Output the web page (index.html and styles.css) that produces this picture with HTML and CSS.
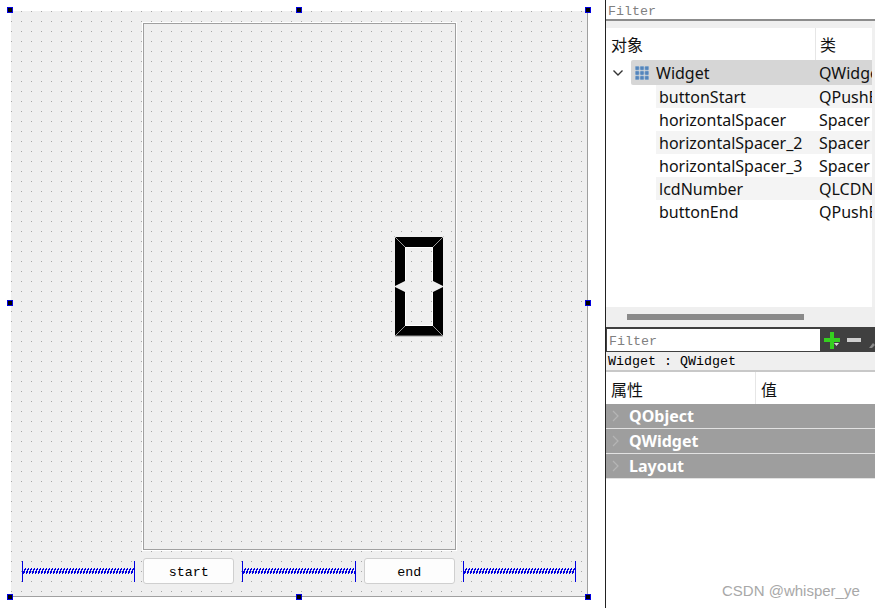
FILE: index.html
```html
<!DOCTYPE html>
<html lang="en">
<head>
  <meta charset="UTF-8" />
  <title>Qt Designer - Widget</title>
  <link rel="stylesheet" href="styles.css">
</head>
<body>
  <!-- Form editor -->
  <div class="editor">
    <div class="form">
      <div class="frame">
        <svg class="lcd" width="50" height="101" viewBox="0 0 50 101">
          <g fill="#000">
            <polygon points="1,1 49,1 39,11 11,11" />
            <polygon points="1,1 11,11 11,45 1,50" />
            <polygon points="49,1 39,11 39,45 49,50" />
            <polygon points="1,51 11,56 11,90 1,100" />
            <polygon points="49,51 39,56 39,90 49,100" />
            <polygon points="11,90 39,90 49,100 1,100" />
          </g>
          <path d="M0.5 0.5 L11 11 M49.5 0.5 L39 11 M1 100 L11 90 M49 100 L39 90 M1 100 H49" fill="none" stroke="#9a9a9a" stroke-width="1" />
          <path d="M11.5 11.5 H38.5 V44 M11.5 11.5 V44 M11.5 57 V89.5 H38.5 V57" fill="none" stroke="#fff" stroke-width="1" />
        </svg>
      </div>
      <div class="button-row">
        <div class="spacer"></div>
        <div class="push-button">start</div>
        <div class="spacer"></div>
        <div class="push-button">end</div>
        <div class="spacer"></div>
      </div>
      <span class="handle h-tl"></span>
      <span class="handle h-tc"></span>
      <span class="handle h-tr"></span>
      <span class="handle h-ml"></span>
      <span class="handle h-mr"></span>
      <span class="handle h-bl"></span>
      <span class="handle h-bc"></span>
      <span class="handle h-br"></span>
    </div>
  </div>

  <!-- Right docks -->
  <div class="docks">
    <div class="filter-top">Filter</div>
    <div class="inspector">
      <div class="table-head">
        <div class="head-cell col-name">对象</div>
        <div class="head-cell col-class">类</div>
      </div>
      <div class="tree-row root">
        <svg class="arrow" width="12" height="8" viewBox="0 0 12 8"><path d="M1.5 1.5 L6 6 L10.5 1.5" fill="none" stroke="#333" stroke-width="1.4" /></svg>
        <div class="root-sel">
          <svg class="widget-icon" width="14" height="14" viewBox="0 0 14 14">
            <g fill="#5585bb" stroke="#8fb2d6" stroke-width="0.5">
              <rect x="0.3" y="0.3" width="3.8" height="3.8" rx="0.8" /><rect x="5.1" y="0.3" width="3.8" height="3.8" rx="0.8" /><rect x="9.9" y="0.3" width="3.8" height="3.8" rx="0.8" />
              <rect x="0.3" y="5.1" width="3.8" height="3.8" rx="0.8" /><rect x="5.1" y="5.1" width="3.8" height="3.8" rx="0.8" /><rect x="9.9" y="5.1" width="3.8" height="3.8" rx="0.8" />
              <rect x="0.3" y="9.9" width="3.8" height="3.8" rx="0.8" /><rect x="5.1" y="9.9" width="3.8" height="3.8" rx="0.8" /><rect x="9.9" y="9.9" width="3.8" height="3.8" rx="0.8" />
            </g>
          </svg>
          <span class="obj-name">Widget</span>
          <span class="obj-class">QWidget</span>
        </div>
      </div>
      <div class="tree-row child alt"><span class="obj-name">buttonStart</span><span class="obj-class">QPushButton</span></div>
      <div class="tree-row child"><span class="obj-name">horizontalSpacer</span><span class="obj-class">Spacer</span></div>
      <div class="tree-row child alt"><span class="obj-name">horizontalSpacer_2</span><span class="obj-class">Spacer</span></div>
      <div class="tree-row child"><span class="obj-name">horizontalSpacer_3</span><span class="obj-class">Spacer</span></div>
      <div class="tree-row child alt"><span class="obj-name">lcdNumber</span><span class="obj-class">QLCDNumber</span></div>
      <div class="tree-row child"><span class="obj-name">buttonEnd</span><span class="obj-class">QPushButton</span></div>
    </div>
    <div class="scrollbar"><div class="scroll-thumb"></div></div>

    <div class="prop-toolbar">
      <div class="filter-input">Filter</div>
      <svg class="tool-plus" width="16" height="19" viewBox="0 0 16 19">
        <path d="M6 1 H10 V7 H16 V11 H10 V18 H6 V11 H0 V7 H6 Z" fill="#35d01f" />
        <path d="M10 12 H15 L12.5 15 Z" fill="#ddd" />
      </svg>
      <div class="tool-minus"></div>
      <svg class="tool-edit" width="6" height="8" viewBox="0 0 6 8"><path d="M0 7 L4 2 L6 4 L3 7 Z" fill="#8a8a8a" /></svg>
    </div>
    <div class="prop-title">Widget : QWidget</div>
    <div class="table-head prop-head">
      <div class="head-cell col-prop">属性</div>
      <div class="head-cell">值</div>
    </div>
    <div class="group-row"><svg class="group-arrow" width="7" height="12" viewBox="0 0 7 12"><path d="M1 1 L6 6 L1 11" fill="none" stroke="#b5b5b5" stroke-width="1.2" /></svg>QObject</div>
    <div class="group-row"><svg class="group-arrow" width="7" height="12" viewBox="0 0 7 12"><path d="M1 1 L6 6 L1 11" fill="none" stroke="#b5b5b5" stroke-width="1.2" /></svg>QWidget</div>
    <div class="group-row"><svg class="group-arrow" width="7" height="12" viewBox="0 0 7 12"><path d="M1 1 L6 6 L1 11" fill="none" stroke="#b5b5b5" stroke-width="1.2" /></svg>Layout</div>
  </div>

  <div class="watermark">CSDN @whisper_ye</div>
</body>
</html>
```

FILE: styles.css
```css
* {
  box-sizing: border-box;
  margin: 0;
  padding: 0;
}
body {
  display: flex;
  width: 875px;
  height: 608px;
  overflow: hidden;
  position: relative;
  background-color: #fff;
  font-family: "Noto Sans", "Noto Sans CJK SC", sans-serif;
  color: #111;
}

/* Form editor */
.editor {
  width: 605px;
  padding: 11px 0 0 11px;
}
.form {
  position: relative;
  display: flex;
  flex-direction: column;
  width: 577px;
  height: 586px;
  padding: 12px 11px 11px 11px;
  background-color: #efefef;
  background-image: radial-gradient(circle at 0.5px 0.5px, #a6a6a6 0.5px, transparent 0.5px);
  background-size: 10px 10px;
  border-right: 1px solid #a0a0a0;
  border-bottom: 1px solid #a0a0a0;
}
.frame {
  display: flex;
  align-items: center;
  justify-content: flex-end;
  width: 313px;
  height: 527px;
  margin-left: 121px;
  padding-right: 11px;
  border: 1px solid #a0a0a0;
  box-shadow: 0 0 0 1px #fff;
}
.lcd {
  display: block;
}
.button-row {
  display: flex;
  align-items: center;
  gap: 8px;
  height: 26px;
  margin-top: 8px;
}
.spacer {
  flex: 1;
  height: 21px;
  background: linear-gradient(110deg, transparent 34%, #0000e0 34% 62%, transparent 62%) 0 center / 3px 6px repeat-x;
  border-left: 1px solid #0000e0;
  border-right: 1px solid #0000e0;
}
.push-button {
  width: 91px;
  height: 26px;
  padding-top: 6px;
  background-color: #fdfdfd;
  border: 1px solid #cfcfcf;
  border-radius: 3px;
  font-family: "Liberation Mono", monospace;
  font-size: 13.33px;
  line-height: 16px;
  text-align: center;
  color: #000;
}
.handle {
  position: absolute;
  width: 6px;
  height: 6px;
  background-color: #000;
  border: 1px solid #0000e0;
}
.h-tl { left: -4px; top: -4px; }
.h-tc { left: 285px; top: -4px; }
.h-tr { left: 574px; top: -4px; }
.h-ml { left: -4px; top: 289px; }
.h-mr { left: 574px; top: 289px; }
.h-bl { left: -4px; top: 583px; }
.h-bc { left: 285px; top: 583px; }
.h-br { left: 574px; top: 583px; }

/* Right docks */
.docks {
  width: 270px;
  border-left: 1px solid #222;
  overflow: hidden;
}
.filter-top {
  height: 21px;
  padding: 3px 0 0 2px;
  border-bottom: 2px solid #8c8c8c;
  font-family: "Liberation Mono", monospace;
  font-size: 13.33px;
  line-height: 17px;
  color: #808080;
}
.inspector {
  height: 286px;
  padding-top: 7px;
  background: linear-gradient(#efefef, #efefef) top / 100% 7px no-repeat;
  border-right: 3px solid #f0f0f0;
}
.table-head {
  display: flex;
  height: 32px;
  font-size: 16px;
  line-height: 34px;
}
.head-cell {
  padding-left: 5px;
  white-space: nowrap;
}
.col-name {
  width: 210px;
  border-right: 1px solid #e6e6e6;
}
.col-class {
  padding-left: 4px;
}
.tree-row {
  display: flex;
  align-items: center;
  height: 23px;
  font-size: 16px;
  white-space: nowrap;
}
.root {
  height: 25px;
}
.arrow {
  margin-left: 6px;
}
.root-sel {
  display: flex;
  align-items: center;
  flex: 1;
  height: 25px;
  margin-left: 7px;
  padding-left: 4px;
  background-color: #d6d6d6;
  border-radius: 2px 0 0 2px;
  overflow: hidden;
}
.widget-icon {
  flex: none;
  margin-right: 7px;
}
.child {
  margin-left: 50px;
  padding-left: 3px;
  overflow: hidden;
}
.alt {
  background-color: #f4f4f4;
}
.obj-name {
  flex: none;
  width: 160px;
}
.root .obj-name {
  width: 163px;
}
.scrollbar {
  height: 20px;
  padding: 7px 0 0 21px;
  background-color: #efefef;
}
.scroll-thumb {
  width: 177px;
  height: 6px;
  background-color: #8a8a8a;
}
.prop-toolbar {
  display: flex;
  align-items: center;
  height: 25px;
  padding-left: 1px;
  background-color: #404040;
}
.filter-input {
  width: 216px;
  height: 22px;
  padding: 4px 0 0 2px;
  background-color: #fff;
  font-family: "Liberation Mono", monospace;
  font-size: 13.33px;
  line-height: 17px;
  color: #808080;
}
.tool-plus {
  flex: none;
  margin: 2px 0 0 4px;
}
.tool-minus {
  flex: none;
  width: 14px;
  height: 4px;
  margin: 0 0 0 7px;
  background-color: #cfcfcf;
}
.tool-edit {
  flex: none;
  margin: 10px 0 0 8px;
}
.prop-title {
  height: 20px;
  padding: 1px 0 0 2px;
  background-color: #efefef;
  border-bottom: 2px solid #c8c8c8;
  font-family: "Liberation Mono", monospace;
  font-size: 13.33px;
  line-height: 17px;
  color: #000;
  white-space: pre;
}
.prop-head {
  height: 32px;
  line-height: 36px;
}
.col-prop {
  width: 150px;
  border-right: 1px solid #e6e6e6;
}
.group-row {
  display: flex;
  align-items: center;
  gap: 10px;
  height: 25px;
  padding-left: 6px;
  background-color: #9e9e9e;
  border-bottom: 1px solid #e2e2e2;
  font-size: 16px;
  font-weight: 700;
  color: #fff;
}
.watermark {
  position: absolute;
  left: 722px;
  top: 582px;
  font-family: "Liberation Sans", sans-serif;
  font-size: 15px;
  color: #a8a8a8;
}
```
